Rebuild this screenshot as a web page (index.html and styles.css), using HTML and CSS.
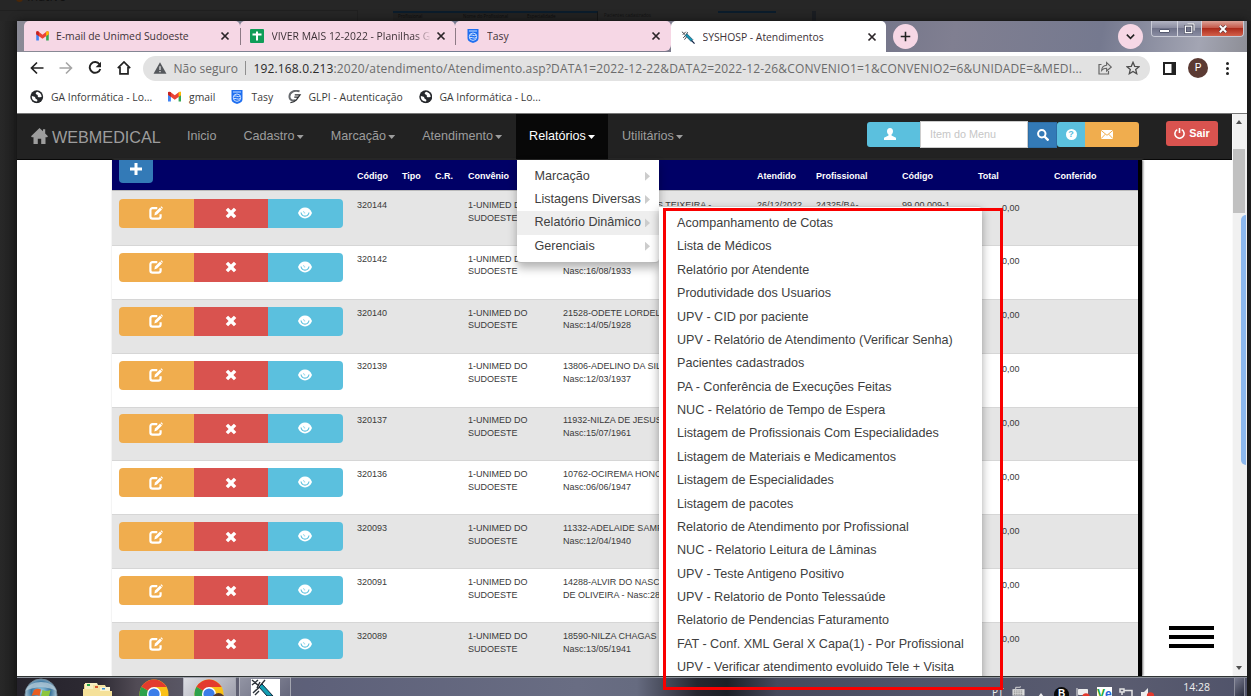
FILE: index.html
```html
<!DOCTYPE html>
<html lang="pt-BR">
<head>
<meta charset="utf-8">
<title>SYSHOSP - Atendimentos</title>
<link rel="stylesheet" href="styles.css">
</head>
<body>
<svg class="defs" aria-hidden="true">
  <symbol id="i-edit" viewBox="0 0 14 14"><path d="M8.3 2.2H3.6C2.3 2.2 1.4 3.1 1.4 4.4v6c0 1.3.9 2.2 2.2 2.2h5.8c1.3 0 2.2-.9 2.2-2.2V8.2" fill="none" stroke="#fff" stroke-width="2.200"/><path d="M5.3 9.4l.7-2.9L11 1.6l2 2-5 5z" fill="#fff"/><path d="M11.5 1.1l.9-.9L14 1.9l-.8.9z" fill="#fff"/></symbol>
  <symbol id="i-x" viewBox="0 0 12 12"><path d="M3.1.7L6 3.6 8.9.7l2.4 2.4L8.4 6l2.900 2.900-2.400 2.400L6 8.400l-2.900 2.900L.7 8.900 3.600 6 .7 3.100z" fill="#fff"/></symbol>
  <symbol id="i-eye" viewBox="0 0 14 12"><path d="M0 6C1.500 2.300 4 .6 7 .6S12.500 2.300 14 6c-1.500 3.700-4 5.400-7 5.400S1.500 9.700 0 6z" fill="#fff"/><path d="M3 5.500c.4 2.500 2 3.600 4 3.600s3.600-1.100 4-3.600" fill="none" stroke="#5bc0de" stroke-width="1.100"/><path d="M5.600 4.200c0 1.200.6 1.800 1.600 1.800" fill="none" stroke="#5bc0de" stroke-width=".7"/></symbol>
  <symbol id="i-close" viewBox="0 0 10 10"><path d="M1.500 1.500l7 7m0-7l-7 7" stroke="#2b2529" stroke-width="1.700"/></symbol>
  <symbol id="i-gmail" viewBox="0 0 14 11"><path d="M0 1.500v9h3V4z" fill="#4285f4"/><path d="M14 1.500v9h-3V4z" fill="#34a853"/><path d="M0 3.500V1.500C0 .2 1.500-.2 2.500.6L7 4l4.500-3.400C12.500-.2 14 .2 14 1.500v2L7 8.500z" fill="#ea4335"/><path d="M11 1l.5-.4C12.500-.2 14 .2 14 1.500v2l-3 2.100z" fill="#fbbc04"/><path d="M0 1.500v2l3 2.100V1L2.500.6C1.500-.2 0 .2 0 1.500z" fill="#c5221f"/></symbol>
  <symbol id="i-shield" viewBox="0 0 12 14"><path d="M.5 0h11v9c0 3-2.500 4-5.500 5C3 13 .5 12 .5 9z" fill="#1f6ff0"/><path d="M2 2h8" stroke="#a9cbff" stroke-width="1.200" fill="none"/><path d="M2.500 6.500c2-2 4 1.500 7-.5M2.500 9c2-2 4 1.500 7-.5" stroke="#cfe2ff" stroke-width="1" fill="none"/><circle cx="6" cy="7.700" r="3.700" fill="none" stroke="#d6e6ff" stroke-width=".9"/></symbol>
  <symbol id="i-globe" viewBox="0 0 14 14"><circle cx="7" cy="7" r="6.700" fill="#26282c"/><path d="M7.500 1.900c-1 .5-1.700 1.100-1.500 2 .3.900 1.600.5 2 1.500.4.900-.5 1.500.8 2 1 .4 2.100-.5 3.300-.2-.1-2.700-1.900-4.800-4.600-5.300zM1.900 6.200c1.300.3 2.800.4 3.400 1.400.6 1 .1 1.500 1.400 2 .9.400 1.300.8.600 2.200C4 12 1.600 9.800 1.900 6.200z" fill="#fff"/></symbol>
  <symbol id="i-syringe" viewBox="0 0 16 16"><path d="M1 2l4 3.500M2 5.500L5.500 2M7.500 2.500l-2 4M2.500 9l3-3M4 11l3-4" stroke="#3a4046" stroke-width="1.100"/><path d="M4.800 6.300l2-2 6.700 6.700-2 2z" fill="#1596b4" stroke="#23506a" stroke-width=".8"/><path d="M12 12l3.500 3.500" stroke="#124" stroke-width="1.300"/></symbol>
  <symbol id="i-chrome" viewBox="0 0 30 30"><circle cx="15" cy="15" r="14.500" fill="#fbc116"/><path d="M15 15L2.500 7.700A14.500 14.500 0 0 0 13 29.400l6-10.400z" fill="#2da14b"/><path d="M15 15L2.500 7.700A14.500 14.500 0 0 1 27.600 8H15z" fill="#e33b2e"/><circle cx="15" cy="15" r="7" fill="#fff"/><circle cx="15" cy="15" r="5.600" fill="#3b7de9"/></symbol>
</svg>

<div class="viewer">
  <div class="behind" aria-hidden="true">
    <span class="behind-dot"></span><span class="behind-label">Inativo</span>
    <span class="behind-rule"></span>
    <div class="behind-table"><span>Profissional</span><span>Nome do Profissional</span><span>Especialidade</span></div>
    <span class="behind-note">Pacientes cadastrados</span>
    <span class="behind-card"></span><span class="behind-mark"></span>
  </div>

  <div class="screen">
    <div class="tabstrip">
      <div class="tab first"><svg class="fav" viewBox="0 0 14 11"><use href="#i-gmail"/></svg><span class="title t1">E-mail de Unimed Sudoeste</span><svg class="close"><use href="#i-close"/></svg></div>
      <div class="tab"><svg class="fav" viewBox="0 0 14 14"><rect width="14" height="14" rx="1" fill="#0f9d58"/><path d="M7 2.500v9M2.500 5.500h9" stroke="#fff" stroke-width="2"/></svg><span class="title t2">VIVER MAIS 12-2022 - Planilhas G</span><svg class="close"><use href="#i-close"/></svg></div>
      <div class="tab last"><svg class="fav"><use href="#i-shield"/></svg><span class="title t3">Tasy</span><svg class="close"><use href="#i-close"/></svg></div>
      <div class="tab active"><svg class="fav"><use href="#i-syringe"/></svg><span class="title t4">SYSHOSP - Atendimentos</span><svg class="close"><use href="#i-close"/></svg></div>
      <div class="round"><svg viewBox="0 0 12 12"><path d="M6 .8v10.400M.8 6h10.400" stroke="#222" stroke-width="1.700"/></svg></div>
      <div class="round search-tabs"><svg viewBox="0 0 12 12"><path d="M2 4l4 4 4-4" fill="none" stroke="#222" stroke-width="1.700"/></svg></div>
      <div class="caption">
        <span class="cap min"><i></i></span>
        <span class="cap max"><svg viewBox="0 0 12 12"><path d="M3.500 1h7.500v7.500M1.500 3.500h7v7h-7z" fill="none" stroke="#43465a" stroke-width="2.600"/><path d="M3.500 1h7.500v7.500M1.500 3.500h7v7h-7z" fill="none" stroke="#fff" stroke-width="1.300"/></svg></span>
        <span class="cap quit"><svg viewBox="0 0 12 10"><path d="M2 1l8 8M10 1L2 9" stroke="#5a3a3e" stroke-width="4"/><path d="M2 1l8 8M10 1L2 9" stroke="#fff" stroke-width="2.400"/></svg></span>
      </div>
    </div>

    <div class="toolbar">
      <div class="navicons">
        <svg viewBox="0 0 14 14"><path d="M13.500 7H1.800M7 1.500L1.500 7 7 12.500" fill="none" stroke="#222" stroke-width="1.700"/></svg>
        <svg viewBox="0 0 14 14"><path d="M.5 7h11.700M7 1.500L12.500 7 7 12.500" fill="none" stroke="#a5a5a5" stroke-width="1.600"/></svg>
        <svg viewBox="0 0 14 14"><path d="M11.500 3.200A5.400 5.400 0 1 0 12.300 8" fill="none" stroke="#222" stroke-width="1.900"/><path d="M13 .8v5.400H7.600z" fill="#222"/></svg>
        <svg viewBox="0 0 14 14"><path d="M.8 7.200L7 1l6.200 6.200M3 6v6.800h8V6" fill="none" stroke="#222" stroke-width="1.700"/></svg>
      </div>
      <div class="omnibox">
        <svg class="warn" viewBox="0 0 14 13"><path d="M7 .4L14 12.600H0z" fill="#55585c"/><path d="M7 4.500v4.200M7 9.700v1.500" stroke="#e2e2e2" stroke-width="1.400"/></svg>
        <span class="unsafe">Não seguro</span><i class="bar"></i>
        <span class="url"><b>192.168.0.213</b>:2020/atendimento/Atendimento.asp?DATA1=2022-12-22&amp;DATA2=2022-12-26&amp;CONVENIO1=1&amp;CONVENIO2=6&amp;UNIDADE=&amp;MEDI...</span>
        <svg class="share" viewBox="0 0 14 14"><path d="M3.500 3.500H1v9.500h9.500v-3" fill="none" stroke="#666" stroke-width="1.200"/><path d="M3.600 9.500c.3-3 2-5 5-5.200V1.500L13.300 6 8.600 10V7.300c-2.300 0-3.700.6-5 2.200z" fill="none" stroke="#666" stroke-width="1.100"/></svg>
        <svg class="star" viewBox="0 0 14 14"><path d="M7 1.300l1.700 4 4.300.4-3.300 2.800 1 4.200L7 10.500l-3.700 2.200 1-4.200L1 5.700l4.300-.4z" fill="none" stroke="#4c4c4c" stroke-width="1.300"/></svg>
      </div>
      <svg class="side" viewBox="0 0 13 13"><path d="M1 1h11v11H1z" fill="#fff" stroke="#222" stroke-width="2"/><path d="M8.500 1H12v11H8.500z" fill="#222"/></svg>
      <span class="avatar">P</span>
      <span class="dots"><i></i><i></i><i></i></span>
    </div>

    <div class="bookmarks">
      <svg class="bi"><use href="#i-globe"/></svg><span class="k1">GA Informática - Lo...</span>
      <svg class="bi" viewBox="0 -1.500 14 14"><use href="#i-gmail" width="14" height="11"/></svg><span class="k2">gmail</span>
      <svg class="bi tall"><use href="#i-shield"/></svg><span class="k3">Tasy</span>
      <svg class="bi" viewBox="0 0 14 14"><path d="M12 1.500C7-.5 1.500 2 1.500 6.700c0 4 3.600 5 6.500 3.400" fill="none" stroke="#66696d" stroke-width="2"/><path d="M7 5h5.500L8.500 10.500c-1.500 1.700-3.500 2.300-6 2.500M6.500 7.500h4" fill="none" stroke="#2e3033" stroke-width="1.300"/></svg><span class="k4">GLPI - Autenticação</span>
      <svg class="bi"><use href="#i-globe"/></svg><span class="k5">GA Informática - Lo...</span>
    </div>

    <div class="page">
      <div class="content">
        <nav class="navbar">
          <a class="brand"><svg viewBox="0 0 17 16"><path d="M8.500 0L12 3.300V1.200h2.200v4.200L17 8.300l-.9 1H14.500V16h-4.300v-5.300H6.800V16H2.500V9.300H.9L0 8.300z" fill="#9d9d9d"/></svg>WEBMEDICAL</a>
          <a class="nav">Inicio</a>
          <a class="nav">Cadastro<i class="caret"></i></a>
          <a class="nav">Marcação<i class="caret"></i></a>
          <a class="nav">Atendimento<i class="caret"></i></a>
          <a class="nav open">Relatórios<i class="caret"></i></a>
          <a class="nav">Utilitários<i class="caret"></i></a>
          <div class="quick">
            <span class="q user"><svg viewBox="0 0 12 12"><path d="M6 0c2 0 3 1.300 3 3.200 0 1.500-.7 2.600-1.500 3.300v1L12 9.800V12H0V9.800l4.500-2.300v-1C3.700 5.800 3 4.700 3 3.200 3 1.300 4 0 6 0z" fill="#fff"/></svg></span>
            <span class="field">Item do Menu</span>
            <span class="q find"><svg viewBox="0 0 12 12"><circle cx="4.800" cy="4.800" r="3.700" fill="none" stroke="#fff" stroke-width="2"/><path d="M7.500 7.500l4 4" stroke="#fff" stroke-width="2.400"/></svg></span>
            <span class="q help"><b>?</b></span>
            <span class="q mail"><svg viewBox="0 0 12 9"><path d="M0 0h12v9H0z" fill="#fff"/><path d="M0 .3l6 5 6-5M0 8.700l4.300-4.500M12 8.700L7.700 4.200" fill="none" stroke="#f0ad4e" stroke-width="1"/></svg></span>
          </div>
          <span class="exit"><svg viewBox="0 0 12 12"><path d="M3.600 1.800a5 5 0 1 0 4.800 0M6 0v5.500" fill="none" stroke="#fff" stroke-width="1.700"/></svg>Sair</span>
        </nav>

        <div class="grid" id="grid">
          <div class="head">
            <span class="add"><svg viewBox="0 0 12 12"><path d="M6 0v12M0 6h12" stroke="#fff" stroke-width="3"/></svg></span>
            <span>Código</span><span>Tipo</span><span>C.R.</span><span>Convênio</span><span></span><span>Atendido</span><span>Profissional</span><span>Código</span><span>Total</span><span>Conferido</span>
          </div>
        </div>

        <ul class="menu">
          <li>Marcação</li><li>Listagens Diversas</li><li class="hover">Relatório Dinâmico</li><li>Gerenciais</li>
        </ul>
        <ul class="submenu">
          <li>Acompanhamento de Cotas</li><li>Lista de Médicos</li><li>Relatório por Atendente</li><li>Produtividade dos Usuarios</li><li>UPV - CID por paciente</li><li>UPV - Relatório de Atendimento (Verificar Senha)</li><li>Pacientes cadastrados</li><li>PA - Conferência de Execuções Feitas</li><li>NUC - Relatório de Tempo de Espera</li><li>Listagem de Profissionais Com Especialidades</li><li>Listagem de Materiais e Medicamentos</li><li>Listagem de Especialidades</li><li>Listagem de pacotes</li><li>Relatorio de Atendimento por Profissional</li><li>NUC - Relatorio Leitura de Lâminas</li><li>UPV - Teste Antigeno Positivo</li><li>UPV - Relatorio de Ponto Telessaúde</li><li>Relatorio de Pendencias Faturamento</li><li>FAT - Conf. XML Geral X Capa(1) - Por Profissional</li><li>UPV - Verificar atendimento evoluido Tele + Visita</li>
        </ul>
        <div class="burger"><i></i><i></i><i></i></div>
      </div>
      <div class="scroll"><i class="up"></i><span class="thumb"></span><i class="down"></i><span class="glow"></span></div>
    </div>

    <div class="taskbar">
      <svg class="orb" viewBox="0 0 34 34"><defs><radialGradient id="orb" cx=".5" cy=".4"><stop offset="0" stop-color="#9fd4ec"/><stop offset=".6" stop-color="#3a749e"/><stop offset="1" stop-color="#a9c4d4"/></radialGradient></defs><circle cx="17" cy="17" r="16" fill="url(#orb)" stroke="#6f8797"/><path d="M1.500 13C5 1 29 1 32.500 13 23 8 11 8 1.500 13z" fill="#b4cbd8" opacity=".8"/><path d="M10 12c3-2 5-1.500 7-.5L15.500 18c-3-1.500-5-1-8 0z" fill="#e85d22"/><path d="M18.500 12c3 1.500 5 1.300 8 0L25 18c-3 1.500-5 1.500-8 .5z" fill="#8cc63e"/></svg>
      <svg class="folder" viewBox="0 0 29 20"><path d="M1 2h8l2 2v16H1z" fill="#e9d287"/><path d="M2 1h12l1 2v4H2z" fill="#f8efc0"/><path d="M10 3h12l1 2v4H10z" fill="#f3e2a0"/><path d="M17 5h10v5H17z" fill="#fbf4cf"/><path d="M0 7h15l2 2h12v11H0z" fill="#f5e19a"/><path d="M4 2h3v2H4z" fill="#24a646"/><path d="M12 4h3v2h-3z" fill="#d85b31"/><path d="M19 6h3v1.500h-3z" fill="#3b94d9"/></svg>
      <svg class="chrome"><use href="#i-chrome"/></svg>
      <span class="task on"><svg class="chrome2"><use href="#i-chrome"/></svg><i class="who"></i></span>
      <span class="task"><svg class="app" viewBox="0 0 29 17"><path d="M0 0h29v17H0z" fill="#fff"/><path d="M1 1l7 6M1 6l6-5M14 1L9 7M3 13l8-7M5 11l-3 3M8 12l-4 4M9 3l-3 6" stroke="#2b3138" stroke-width="1.400"/><path d="M8 8l3-3 11 12h-6z" fill="#129fb3" stroke="#10243a"/></svg></span>
      <div class="tray">
        <span class="lang">PT</span>
        <svg class="kb" viewBox="0 0 14 10"><path d="M4 3V1h5V0" fill="none" stroke="#ddd"/><path d="M.5 3h13v7H.5z" fill="#ddd"/><path d="M2 5h10M2 7h10M2 9h10" stroke="#555" stroke-width=".9" stroke-dasharray="1 1"/></svg>
        <svg class="tri" viewBox="0 0 6 4"><path d="M0 4l3-4 3 4z" fill="#eee"/></svg>
        <span class="b">B</span>
        <svg class="flag" viewBox="0 0 14 10"><path d="M1 0v10M2.500 1.500h9v5h-9z" fill="#eee" stroke="#eee"/><circle cx="10" cy="9" r="3.700" fill="#e2382c"/></svg>
        <span class="vnc"><b>V</b><em>e</em></span>
        <svg class="net" viewBox="0 0 14 10"><path d="M1 4h4V1h-4zM3 4v3M5 2.500h8V10" fill="none" stroke="#e5e5e5" stroke-width="1.500"/></svg>
        <svg class="vol" viewBox="0 0 14 10"><path d="M0 4h3l4-4v10H0z" fill="#eee"/><circle cx="9.500" cy="8" r="3.700" fill="#e2382c"/></svg>
        <span class="clock">14:28</span>
      </div>
      <span class="peek"></span>
    </div>
    <div class="highlight"></div>
  </div>
</div>
<script src="rows.js"></script>
</body>
</html>
```

FILE: styles.css
```css
* { box-sizing: border-box; }
body { margin: 0; background: #262626; overflow: hidden; font-family: "Liberation Sans", Arial, sans-serif; }
.defs { position: absolute; width: 0; height: 0; }
svg { display: block; flex: none; }
.viewer { position: relative; width: 1251px; height: 696px; overflow: hidden; padding: 21px 4px 0 17px; background: linear-gradient(90deg, #282828, #202020 17px, #262626 30px, #262626 1200px, #212121); }

/* dimmed page behind the viewer */
.behind { position: absolute; inset: 0 0 auto 0; height: 21px; overflow: hidden; background: #262626; color: #111; }
.behind-dot { position: absolute; left: 16px; top: -5px; width: 7px; height: 7px; border-radius: 50%; background: #4a2708; }
.behind-label { position: absolute; left: 27px; top: -11px; font: 12.500px/16px "Open Sans", sans-serif; }
.behind-rule { position: absolute; left: 0; top: 10px; width: 358px; height: 11px; border-top: 1px solid #202020; border-right: 1px solid #202020; }
.behind-table { position: absolute; left: 393px; top: 11px; width: 205px; height: 10px; border-top: 2px solid #0b1c2b; border-right: 1px solid #151515; display: grid; grid-template-columns: 65px 64px 1fr; padding-left: 5px; font: 4.500px/7px "Open Sans", sans-serif; background: #222; color: #0c0c0c; }
.behind-note { position: absolute; left: 604px; top: 11px; font: 4.500px/8px "Open Sans", sans-serif; }
.behind-card { position: absolute; left: 718px; top: 11px; width: 58px; height: 2px; background: #0b1c2b; }
.behind-mark { position: absolute; left: 812px; top: 11px; width: 4px; height: 10px; background: #1a1d22; }

.screen { position: relative; width: 1230px; height: 675px; background: #fff; display: flex; flex-direction: column; box-shadow: 0 0 8px #111; }

/* tab strip */
.tabstrip { height: 31px; flex: none; display: flex; background: linear-gradient(100deg, #8a8a95, #747a90 35%, #7f7c8c 58%, #6f7186 66%, #807f91 76%, #75798f 88%, #a3a5b3 96%, #8d8e96); padding-left: 7px; font: 10.400px/30px "Open Sans", sans-serif; color: #3e3338; }
.tab { width: 215.500px; height: 30px; background: #f6d7e5; display: flex; align-items: center; padding: 0 9.500px 0 10.500px; border-radius: 5px 5px 0 0; position: relative; }
.tab + .tab::before { content: ""; position: absolute; left: 0; top: 7px; width: 1px; height: 17px; background: #8d7a85; }
.tab.first { border-bottom-left-radius: 0; }
.tab.last { border-bottom-right-radius: 6px; }
.tab.active { background: #fff; height: 31px; }
.tab.active::before { display: none; }
.fav { width: 14px; height: 14px; margin-right: 7.500px; }
.first .fav { width: 13px; height: 10px; margin-right: 7.500px; margin-left: 1px; }
.title { flex: 1; overflow: hidden; white-space: nowrap; }
.t1 { letter-spacing: -.03px; }
.t2 { margin-right: 5px; -webkit-mask-image: linear-gradient(90deg, #000 90%, transparent); }
.t4 { letter-spacing: -.03px; }
.close { width: 10px; height: 10px; }
.round { width: 25px; height: 25px; border-radius: 50%; background: #f6d7e5; margin: 3px 0 0 7px; display: grid; place-items: center; }
.round svg { width: 11px; height: 11px; }
.search-tabs { margin-left: 200px; }
.caption { margin-left: 8px; height: 16px; width: 93px; display: flex; border: 1px solid #c9cbd6; border-top: 0; border-radius: 0 0 4px 4px; overflow: hidden; }
.cap { display: grid; place-items: center; background: linear-gradient(#b2b4c3, #8c8ea2 45%, #6f7289 50%, #8a8da2); border-right: 1px solid #d3d4de; }
.min { width: 26px; }
.min i { width: 9px; height: 2px; margin-top: 4px; background: #fff; border: 1px solid #555a70; border-radius: 1px; box-sizing: content-box; }
.max { width: 24px; }
.max svg { width: 11px; height: 11px; }
.quit { flex: 1; border: 0; background: linear-gradient(#dca297, #c55a4b 45%, #ad2c1c 50%, #d3604a); }
.quit svg { width: 10px; height: 8px; }

/* address row */
.toolbar { height: 32px; flex: none; display: flex; align-items: center; background: #fff; padding-left: 13px; }
.navicons { display: flex; gap: 15px; width: 113px; }
.navicons svg { width: 14px; height: 14px; }
.omnibox { width: 1007px; height: 25px; border-radius: 13px; background: #e2e2e2; display: flex; align-items: center; font: 12px/25px "Open Sans", sans-serif; color: #6b6b6b; white-space: nowrap; padding-left: 9.500px; }
.warn { width: 14px; height: 12px; }
.unsafe { margin-left: 7px; width: 65px; }
.bar { width: 1px; height: 14px; background: #8f8f8f; margin: 0 7.500px 0 6.500px; }
.url b { font-weight: 400; color: #2a2a2a; }
.url { flex: 1; letter-spacing: .147px; }
.share { width: 14px; height: 14px; margin-right: 14px; }
.star { width: 14px; height: 14px; margin-right: 10px; }
.side { width: 13px; height: 13px; margin-left: 13px; }
.avatar { width: 20px; height: 20px; border-radius: 50%; background: #5b3a33; color: #fff; font: 10.500px/20px Roboto, sans-serif; text-align: center; margin-left: 12px; }
.dots { display: flex; flex-direction: column; gap: 2px; margin-left: 18px; }
.dots i { width: 3px; height: 3px; border-radius: 50%; background: #222; }

.bookmarks { height: 29px; flex: none; display: flex; align-items: center; background: #fff; font: 10.400px/26px "Open Sans", sans-serif; color: #3b3b3b; padding: 0 0 3px 13px; white-space: nowrap; }
.bi { width: 13.500px; height: 13.500px; }
.tall { height: 14px; width: 12px; }
.k1 { margin-left: 7.500px; width: 116.500px; }
.k2 { margin-left: 8px; width: 42px; }
.k3 { margin-left: 8.500px; width: 36.500px; }
.k4 { margin-left: 7px; width: 110px; letter-spacing: .03px; }
.k5 { margin-left: 7.500px; }

/* page */
.page { height: 563px; flex: none; display: flex; border-top: 1px solid #777; overflow: hidden; }
.content { width: 1215px; position: relative; overflow: hidden; background: #fff; }
.navbar { height: 46px; background: #222; border-bottom: 1px solid #080808; display: flex; color: #9d9d9d; font-size: 12.600px; line-height: 45px; padding-left: 14px; }
.brand { width: 142.500px; font-size: 16.200px; line-height: 47px; display: flex; }
.brand svg { width: 17px; height: 16px; margin: 14px 4px 0 0; }
.nav { padding: 0 13.500px; display: flex; align-items: center; }
.open { background: #080808; color: #fff; }
.caret { margin: 1px 0 0 2.200px; width: 7px; height: 4px; background: currentColor; clip-path: polygon(0 0, 100% 0, 50% 100%); }
.quick { display: flex; margin-left: auto; margin-top: 7.500px; height: 25.500px; }
.q { display: grid; place-items: center; height: 25.500px; background: #5bc0de; }
.q svg { width: 12px; height: 12px; }
.user { width: 53px; border-radius: 3px 0 0 3px; padding-right: 8px; }
.field { width: 108px; height: 27px; margin-top: -.5px; background: #fff; border: 1px solid #ccc; color: #c6c6c6; font-size: 10.800px; line-height: 25px; padding-left: 9px; }
.find { width: 29px; background: #337ab7; height: 26px; border: 1px solid #2e6da4; }
.help { width: 28px; border-radius: 3px 0 0 3px; }
.help b { width: 11px; height: 11px; border-radius: 50%; background: #fff; color: #5bc0de; font-size: 9px; line-height: 11px; text-align: center; }
.mail { width: 54px; background: #f0ad4e; border-radius: 0 3px 3px 0; padding-right: 11px; }
.mail svg { height: 9px; }
.exit { width: 52px; height: 25px; margin: 7px 14px 0 27px; border-radius: 3px; background: #d9534f; color: #fff; font-weight: 700; font-size: 10.800px; line-height: 25px; display: flex; justify-content: center; align-items: center; gap: 4px; }
.exit svg { width: 11px; height: 11px; }

.grid { margin-left: 95px; width: 1030px; border-right: 4px solid #000; font-size: 9px; line-height: 12.700px; color: #3a3a3a; white-space: nowrap; box-shadow: 1px 0 2px #666; }
.head, .row { display: grid; grid-template-columns: 238px 45px 33px 33px 95px 194px 59px 86px 76px 76px 1fr; padding-left: 7px; }
.head { height: 31px; background: #000066; color: #fff; font-weight: 700; padding-top: 10px; border-bottom: 1px solid #bbb; }
.add { width: 34px; height: 23px; margin-top: -10px; border-radius: 0 0 4px 4px; background: #337ab7; display: grid; place-items: center; }
.add svg { width: 12px; height: 12px; margin-top: -5px; }
.row { height: 53.880px; padding-top: 6.800px; background: #fff; border-top: 1px solid #d6d6d6; }
.row:nth-child(even) { background: #e5e5e5; }
.head + .row { border-top-color: #e5e5e5; }
.actions { display: flex; width: 224px; height: 29px; border-radius: 4px; overflow: hidden; margin-top: .2px; }
.actions span { flex: 1; display: grid; place-items: center; }
.edit { background: #f0ad4e; }
.del { background: #d9534f; }
.view { background: #5bc0de; }
.edit svg { width: 14px; height: 14px; margin-right: 1px; }
.del svg { width: 12px; height: 12px; margin-right: 1px; }
.view svg { width: 14px; height: 12px; margin: 0 1px 1px 0; }
.zero { padding: 2.800px 0 0 24px; }
.tail { padding-left: 94px; }

ul { list-style: none; margin: 0; font-size: 12.600px; line-height: 23.400px; color: #404040; background: #fff; }
.menu { position: absolute; left: 500px; top: 46px; width: 142px; height: 102.500px; padding-top: 4.500px; border-radius: 0 0 4px 4px; box-shadow: 0 5px 10px rgba(0,0,0,.3); border-bottom: 1px solid #bbb; padding-left: 0; }
.menu li { padding: 0 9px 0 17.500px; height: 23.400px; display: flex; justify-content: space-between; align-items: center; white-space: nowrap; }
.menu li::after { content: ""; width: 5px; height: 9px; background: #ccc; clip-path: polygon(0 0, 100% 50%, 0 100%); }
.hover { background: #eee; }
.submenu { position: absolute; left: 642px; top: 92px; width: 323px; height: 500px; padding: 5px 0 0 18px; border-top: 1px solid #ccc; border-radius: 0 4px 0 0; box-shadow: 0 4px 10px rgba(0,0,0,.35); white-space: nowrap; line-height: 23.380px; }
.burger { position: absolute; left: 1151.500px; top: 512px; width: 45px; display: grid; gap: 5px; }
.burger i { height: 4px; background: #000; }

.scroll { width: 15px; background: #f1f1f1; position: relative; display: flex; flex-direction: column; align-items: center; padding: 6px 2px 6px 0; border-left: 1px solid #fafafa; }
.up, .down { border: 3.500px solid transparent; }
.up { border-bottom: 4px solid #505050; border-top: 0; }
.down { border-top: 4px solid #505050; border-bottom: 0; margin-top: auto; }
.thumb { width: 12px; height: 64px; background: #c1c1c1; margin-top: 25px; }
.glow { position: absolute; left: 8px; top: 101px; width: 5px; height: 250px; background: #8cb8ee; border-radius: 5px 0 0 5px; }

/* taskbar */
.taskbar { height: 20px; flex: none; overflow: hidden; display: flex; align-items: flex-start; border-top: 1px solid #2f3434; box-shadow: inset 0 1px #8c919a; background: linear-gradient(90deg, #25222b, #2d2a33 80px, #514b55 120px, #5f5f70 200px, #5d6079 290px, #696d83 560px, #666b80 620px, #252730 680px, #1c2027 710px, #45495c 760px, #50546a 900px, #5a5c70 1100px, #50536a); padding-left: 7px; }
.orb { width: 34px; height: 34px; margin-top: 1px; }
.folder { width: 29px; height: 20px; margin: 5px 0 0 24.500px; }
.chrome { width: 30px; height: 30px; margin: 2px 0 0 27px; }
.task { width: 52.500px; height: 24px; border: 1px solid #a3a5b0; border-left-color: #b5b6c0; background: linear-gradient(135deg, #9294a3, #63657a); margin-left: 3px; position: relative; flex: none; }
.task.on { margin-left: 14.500px; background: linear-gradient(135deg, #dcdde2, #9c9dab); }
.chrome2 { width: 30px; height: 30px; margin: 1px 0 0 10px; }
.who { position: absolute; left: 28px; top: 15px; width: 13px; height: 13px; border-radius: 50%; background: #54382f; }
.app { width: 29px; height: 17px; margin: 1px 0 0 11px; }
.tray { display: flex; margin-left: auto; margin-right: 24px; color: #eee; width: 218px; }
.tray > * { flex: none; }
.lang { font: 10px/14px "Open Sans", sans-serif; width: 20px; margin-top: 8px; }
.kb { width: 13px; height: 10px; margin-top: 9px; }
.tri { width: 6px; height: 4px; margin: 16px 0 0 13px; }
.b { width: 15px; height: 15px; border-radius: 50%; background: #090909; color: #fff; font: 700 10px/14px "Liberation Sans", sans-serif; text-align: center; margin: 10px 0 0 10px; }
.flag { width: 14px; height: 10px; margin: 11px 0 0 7px; }
.vnc { width: 15px; height: 14px; background: #fff; font-size: 12px; line-height: 14px; margin: 10px 0 0 7px; display: flex; overflow: hidden; }
.vnc b { color: #19a838; }
.vnc em { color: #2c67d8; font-style: normal; font-weight: 700; }
.net { width: 14px; height: 10px; margin: 11px 0 0 7px; }
.vol { width: 14px; height: 10px; margin: 11px 0 0 8px; }
.clock { font: 10.500px/14px "Open Sans", sans-serif; margin: 3px 0 0 auto; }
.peek { width: 11px; height: 20px; border: 1px solid #8b8d9b; background: linear-gradient(135deg, #777a8e, #2d3041); margin-right: 2px; }
.highlight { position: absolute; left: 646px; top: 187px; width: 340px; height: 482px; border: 3px solid #f90000; }
```

FILE: rows.js
```javascript
const rows = [
  ["320144", "<span class='tail'>S TEIXEIRA -</span>", "26/12/2022", "24325/BA-", "99.00.009-1"],
  ["320142", "<br>Nasc:16/08/1933"],
  ["320140", "21528-ODETE LORDEL<br>Nasc:14/05/1928"],
  ["320139", "13806-ADELINO DA SIL<br>Nasc:12/03/1937"],
  ["320137", "11932-NILZA DE JESUS<br>Nasc:15/07/1961"],
  ["320136", "10762-OCIREMA HONO<br>Nasc:06/06/1947"],
  ["320093", "11332-ADELAIDE SAMP<br>Nasc:12/04/1940"],
  ["320091", "14288-ALVIR DO NASC<br>DE OLIVEIRA - Nasc:28"],
  ["320089", "18590-NILZA CHAGAS<br>Nasc:13/05/1941"]
];
const grid = document.getElementById("grid");
for (const [code, patient, seen = "", doctor = "", proc = ""] of rows) {
  const row = document.createElement("div");
  row.className = "row";
  row.innerHTML = `<div class="actions">
      <span class="edit"><svg><use href="#i-edit"/></svg></span>
      <span class="del"><svg><use href="#i-x"/></svg></span>
      <span class="view"><svg><use href="#i-eye"/></svg></span>
    </div>
    <div>${code}</div><div></div><div></div><div>1-UNIMED DO<br>SUDOESTE</div><div>${patient}</div>
    <div>${seen}</div><div>${doctor}</div><div>${proc}</div><div class="zero">0,00</div><div></div>`;
  grid.append(row);
}
```
